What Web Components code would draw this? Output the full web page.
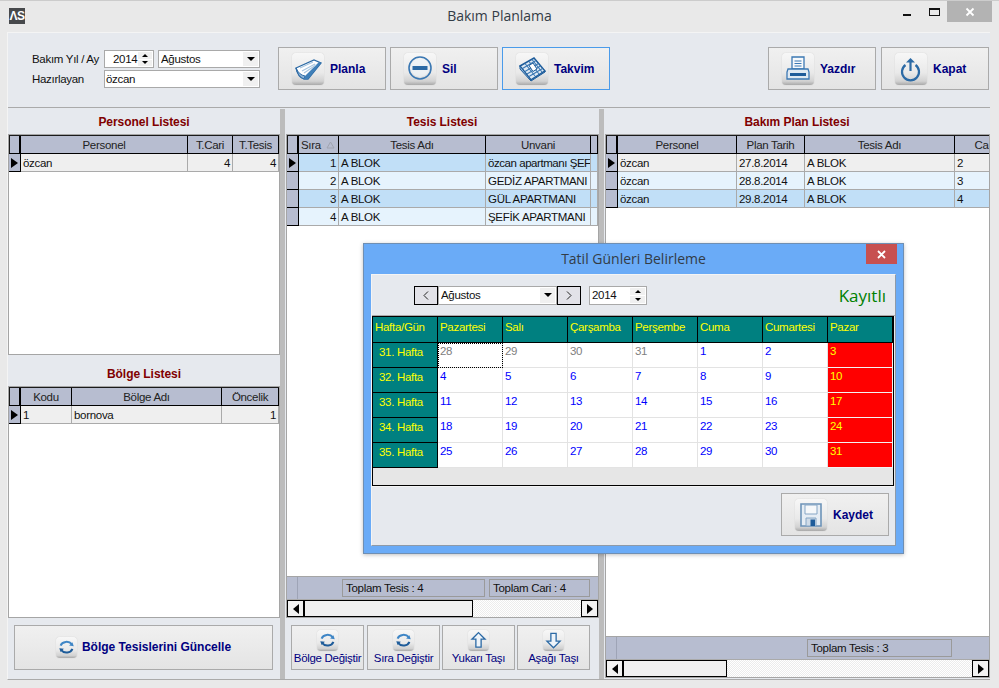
<!DOCTYPE html>
<html lang="tr">
<head>
<meta charset="utf-8">
<title>Bakım Planlama</title>
<style>
  html, body { margin: 0; padding: 0; }
  body { width: 999px; height: 688px; overflow: hidden; font: 11.5px "Liberation Sans", Arial, sans-serif; letter-spacing: -.3px; color: #111; background: #e9e9e9; position: relative; }
</style>
</head>
<body>
<app-window>
  <title-bar slot="top">Bakım Planlama</title-bar>

  <tool-bar slot="top">
    <form-row style="margin-bottom:2px">
      <span style="width:72px;white-space:nowrap">Bakım Yıl / Ay</span>
      <spin-box style="width:50px;margin-right:4px">2014</spin-box>
      <combo-box style="width:102px">Ağustos</combo-box>
    </form-row>
    <form-row>
      <span style="width:72px;white-space:nowrap">Hazırlayan</span>
      <combo-box style="width:156px;padding-left:1px">özcan</combo-box>
    </form-row>
    <push-button slot="left" icon="book" style="width:108px">Planla</push-button>
    <push-button slot="left" icon="minus" style="width:108px">Sil</push-button>
    <push-button slot="left" icon="calendar" active style="width:108px">Takvim</push-button>
    <push-button slot="right" icon="printer" style="width:108px">Yazdır</push-button>
    <push-button slot="right" icon="power" style="width:108px">Kapat</push-button>
  </tool-bar>

  <list-column style="width:272px">
    <panel-title>Personel Listesi</panel-title>
    <data-grid style="height:221px" cols="167px|45px|1fr" lead="12px" head="Personel|T.Cari|T.Tesis" align="lrr" tone="g" rows="özcan|4|4"></data-grid>
    <div style="height:5px;flex:none"></div>
    <panel-title>Bölge Listesi</panel-title>
    <data-grid style="flex:1" cols="51px|150px|1fr" lead="12px" head="Kodu|Bölge Adı|Öncelik" align="llr" tone="g" rows="1|bornova|1"></data-grid>
    <button-row>
      <push-button icon="refresh" small style="width:259px;height:45px;margin-left:6px">Bölge Tesislerini Güncelle</push-button>
    </button-row>
  </list-column>

  <col-split></col-split>

  <list-column style="width:314px">
    <panel-title>Tesis Listesi</panel-title>
    <data-grid style="flex:1;margin-left:1px" cols="40px|147px|105px|1fr" lead="12px" head="Sıra|Tesis Adı|Unvani|" align="rll" tone="bl" sort rows="1|A BLOK|<span style='letter-spacing:-.45px'>özcan apartmanı ŞEF</span>|;2|A BLOK|GEDİZ APARTMANI|;3|A BLOK|GÜL APARTMANI|;4|A BLOK|ŞEFİK APARTMANI|">
      <grid-foot slot="foot" style="--pad:55px">
        <foot-box style="width:143px">Toplam Tesis : 4</foot-box>
        <foot-box style="width:101px">Toplam Cari : 4</foot-box>
      </grid-foot>
      <h-scroll slot="foot" thumb="169"></h-scroll>
    </data-grid>
    <button-row style="gap:2px;padding-left:6px">
      <push-button icon="refresh" stack style="width:73px">Bölge Değiştir</push-button>
      <push-button icon="refresh" stack style="width:73px;margin-left:1px">Sıra Değiştir</push-button>
      <push-button icon="up" stack style="width:73px">Yukarı Taşı</push-button>
      <push-button icon="down" stack style="width:73px">Aşağı Taşı</push-button>
    </button-row>
  </list-column>

  <col-split></col-split>

  <list-column style="flex:1;min-width:0">
    <panel-title>Bakım Plan Listesi</panel-title>
    <data-grid style="flex:1;margin-left:1px;margin-bottom:1px" cols="119px|68px|150px|60px" lead="12px" head="Personel|Plan Tarih|Tesis Adı|Cari" align="llll" tone="glb" rows="özcan|27.8.2014|A BLOK|2;özcan|28.8.2014|A BLOK|3;özcan|29.8.2014|A BLOK|4">
      <grid-foot slot="foot" style="--pad:201px">
        <foot-box style="width:145px">Toplam Tesis : 3</foot-box>
      </grid-foot>
      <h-scroll slot="foot" thumb="104"></h-scroll>
    </data-grid>
  </list-column>
</app-window>

<holiday-dialog>Tatil Günleri Belirleme</holiday-dialog>

<script>
const ICONS = {
  book: `<path d="M4 15 22 7l7 3-13 16h-4Q6 24 4 15Z" fill="#fff" stroke="#2c6aa5" stroke-width="1.300"/><path d="M4 15q3 7 9 8l-1 3Q6 24 4 15Z" fill="#8db4d8" stroke="#2c6aa5"/><path d="M13 23 27 9l2 1-13 16h-4Z" fill="#3f7fb8"/><path d="M8 15l13-6M10 18l13-7M12 20l12-8" stroke="#a9c6e0" stroke-width="1.200"/>`,
  minus: `<circle cx="16" cy="15" r="11" fill="none" stroke="#3b78b3" stroke-width="1.600"/><circle cx="16" cy="15" r="9" fill="#eef3f8" opacity=".7"/><rect x="8.500" y="13" width="15" height="4" fill="#2c6aa5"/>`,
  calendar: `<path d="M4 13 18 5l11 13-14 9Z" fill="#dfe9f3" stroke="#1e5c9a" stroke-width="1.500"/><path d="M6.500 15.500 20 7.500M9 18.500l13.500-8M11 21l13.500-8M13 23.500l13.500-8" stroke="#3b78b3" stroke-width="1.100"/><path d="M9 10.500 19 23M13 8.500l10 12.500M16 6.500l10 12.500" stroke="#3b78b3" stroke-width="1.100"/><path d="M13 12.500l4-2.500 4 6-4 2.500Z" fill="#fff" stroke="#1e5c9a"/><path d="M4 13v3l11 12 14-9v-1L15 27Z" fill="#8db4d8" stroke="#1e5c9a"/>`,
  printer: `<path d="M10 4h12v12H10Z" fill="#f7f9fb" stroke="#3b78b3" stroke-width="1.300"/><path d="M12.500 8h7M12.500 10.500h7M12.500 13h7" stroke="#3b78b3"/><path d="M6 16h20l1 3v7H5v-7Z" fill="#dfe9f2" stroke="#3b78b3" stroke-width="1.300"/><rect x="8" y="20" width="16" height="3" fill="#1e5c9a"/>`,
  power: `<path d="M10.500 12a8.500 8.500 0 1 0 10 0" fill="none" stroke="#2c6aa5" stroke-width="2.200"/><path d="M15.500 18V7" stroke="#2c6aa5" stroke-width="2.200"/><path d="M11 9.500 15.500 5 20 9.500Z" fill="#2c6aa5"/>`,
  refresh: `<path d="M7 13a9.500 8 0 0 1 17-2" fill="none" stroke="#3f86c6" stroke-width="3"/><path d="M27 14l-7-1 5-5Z" fill="#3f86c6"/><path d="M25 18a9.500 8 0 0 1-17 2" fill="none" stroke="#1e5c9a" stroke-width="3"/><path d="M5 17l7 1-5 5Z" fill="#1e5c9a"/>`,
  up: `<path d="M16 4 26 14h-6v12h-8V14H6Z" fill="#eef4fa" stroke="#2c6aa5" stroke-width="2"/>`,
  down: `<path d="M16 27 6 17h6V5h8v12h6Z" fill="#eef4fa" stroke="#2c6aa5" stroke-width="2"/>`,
  save: `<path d="M6 5h20v22H6Z" fill="#e6edf4" stroke="#6d93b8" stroke-width="1.600"/><path d="M10 6h12v9H10Z" fill="#f6f8fa" stroke="#86a6c5"/><path d="M11 19h10v8H11Z" fill="#cfdbe7" stroke="#86a6c5"/><rect x="15.500" y="20.500" width="4.500" height="6.500" fill="#1e5c9a"/>`
};

class AppWindow extends HTMLElement {
  constructor() {
    super();
    this.attachShadow({ mode: "open" });
  }
  connectedCallback() {
    this.shadowRoot.innerHTML = `
      <style>
        :host { display: flex; flex-direction: column; width: 999px; height: 688px; box-sizing: border-box; border-top: 1px solid #ccc; background: #e9e9e9; }
        .panel { margin-left: 7px; width: 983px; height: 648px; flex: none; box-sizing: border-box; border-left: 1px solid #f4f4f4; border-bottom: 1px solid #aaa; background: #e6e9ee; display: flex; flex-direction: column; }
        .cols { display: flex; flex: 1; min-height: 0; }
      </style>
      <slot name="top" id="t"></slot>
      <div class="panel">
        <slot name="tool"></slot>
        <div class="cols"><slot></slot></div>
      </div>
    `;
    // the toolbar belongs inside the panel, the title above it
    this.querySelector("tool-bar").slot = "tool";
  }
}

class TitleBar extends HTMLElement {
  constructor() {
    super();
    this.attachShadow({ mode: "open" });
  }
  connectedCallback() {
    this.shadowRoot.innerHTML = `
      <style>
        :host { display: flex; align-items: center; height: 31px; flex: none; position: relative; font: 14px "Open Sans", sans-serif; letter-spacing: 0; color: #333c46; }
        .logo { position: absolute; left: 9px; top: 7px; width: 16px; height: 16px; background: #47494c; color: #fff; font: bold 12px/16px "Liberation Sans", sans-serif; text-align: center; letter-spacing: -.5px; }
        .t { flex: 1; text-align: center; padding-bottom: 2px; }
        .min { position: absolute; left: 903px; top: 13px; width: 8px; height: 2px; background: #111; }
        .max { position: absolute; left: 929px; top: 7px; width: 9px; height: 5px; border: 1px solid #111; border-top-width: 2px; }
        .close { position: absolute; left: 947px; top: 0; width: 45px; height: 21px; background: #b3b3b3; display: flex; align-items: center; justify-content: center; }
      </style>
      <span class="logo">ΛS</span>
      <span class="t"><slot></slot></span>
      <span class="min"></span><span class="max"></span>
      <span class="close"><svg width="10" height="10" viewBox="0 0 10 10"><path d="M1.500 1.500l7 7M8.500 1.500l-7 7" stroke="#fff" stroke-width="1.800"/></svg></span>
    `;
  }
}

class ToolBar extends HTMLElement {
  constructor() {
    super();
    this.attachShadow({ mode: "open" });
  }
  connectedCallback() {
    this.shadowRoot.innerHTML = `
      <style>
        :host { display: flex; align-items: flex-start; height: 76px; flex: none; box-sizing: border-box; border-top: 1px solid #f4f4f4; border-bottom: 1px solid #aaa; padding: 14px 0 0 24px; }
        .form { width: 228px; margin-right: 18px; padding-top: 3px; }
        .group { display: flex; gap: 4px; }
        .right { margin-left: auto; margin-right: 1px; gap: 5px; }
      </style>
      <div class="form"><slot></slot></div>
      <div class="group"><slot name="left"></slot></div>
      <div class="group right"><slot name="right"></slot></div>
    `;
  }
}

class FormRow extends HTMLElement {
  constructor() {
    super();
    this.attachShadow({ mode: "open" });
  }
  connectedCallback() {
    this.shadowRoot.innerHTML = `
      <style>:host { display: flex; align-items: center; height: 18px; }</style>
      <slot></slot>
    `;
  }
}

class ComboBox extends HTMLElement {
  constructor() {
    super();
    this.attachShadow({ mode: "open" });
  }
  connectedCallback() {
    this.shadowRoot.innerHTML = `
      <style>
        :host { display: flex; align-items: center; height: 18px; box-sizing: border-box; border: 1px solid #a9a9a9; background: #fff; padding-left: 2px; }
        .t { flex: 1; overflow: hidden; white-space: nowrap; }
        .a { width: 15px; align-self: stretch; margin: 1px; background: #f0f0f0; display: flex; align-items: center; justify-content: center; }
        .a i { border: 4px solid transparent; border-top: 4px solid #000; border-bottom: 0; width: 0; height: 0; }
      </style>
      <span class="t"><slot></slot></span>
      <span class="a"><i></i></span>
    `;
  }
}

class SpinBox extends HTMLElement {
  constructor() {
    super();
    this.attachShadow({ mode: "open" });
  }
  connectedCallback() {
    this.shadowRoot.innerHTML = `
      <style>
        :host { display: flex; align-items: center; height: 18px; box-sizing: border-box; border: 1px solid #a9a9a9; background: #fff; padding-left: 8px; }
        .t { flex: 1; }
        .s { width: 15px; align-self: stretch; margin: 1px; display: flex; flex-direction: column; gap: 1px; }
        .s b { flex: 1; background: #f0f0f0; display: flex; align-items: center; justify-content: center; }
        .u { border: 3px solid transparent; border-bottom: 3px solid #000; border-top: 0; width: 0; height: 0; }
        .d { border: 3px solid transparent; border-top: 3px solid #000; border-bottom: 0; width: 0; height: 0; }
      </style>
      <span class="t"><slot></slot></span>
      <span class="s"><b><i class="u"></i></b><b><i class="d"></i></b></span>
    `;
  }
}

class PushButton extends HTMLElement {
  constructor() {
    super();
    this.attachShadow({ mode: "open" });
  }
  connectedCallback() {
    const stack = this.hasAttribute("stack");
    const small = this.hasAttribute("small");
    this.shadowRoot.innerHTML = `
      <style>
        :host { display: flex; box-sizing: border-box; height: ${stack ? 45 : 43}px; flex: none; border: 1px solid ${this.hasAttribute("active") ? "#4a9bea" : "#aaa"}; background: linear-gradient(#f0f0f0, #e4e4e4); color: #000080; font-weight: bold; font-size: 12px; letter-spacing: 0; }
        :host([stack]) { flex-direction: column; align-items: center; font-weight: normal; font-size: 11.500px; letter-spacing: -.3px; white-space: nowrap; padding-top: 4px; gap: 1px; overflow: hidden; }
        :host(:not([stack]):not([small])) { align-items: center; padding-left: 13px; gap: 6px; }
        :host([small]) { align-items: center; justify-content: center; gap: 5px; padding-bottom: 1px; }
        .tile { display: block; flex: none; border-radius: 4px; background: linear-gradient(#f7f7f7 0, #e9e9e9 62%, #d2d2d2 88%, #a9a9a9 100%); box-shadow: 0 0 1px #bbb; }
      </style>
      <svg class="tile" width="${stack || small ? 21 : 32}" height="${stack || small ? 21 : 32}" viewBox="0 0 32 32">${ICONS[this.getAttribute("icon")]}</svg>
      <span><slot></slot></span>
    `;
  }
}

class ListColumn extends HTMLElement {
  constructor() {
    super();
    this.attachShadow({ mode: "open" });
  }
  connectedCallback() {
    this.shadowRoot.innerHTML = `
      <style>:host { display: flex; flex-direction: column; flex: none; min-height: 0; }</style>
      <slot></slot>
    `;
  }
}

class ColSplit extends HTMLElement {
  constructor() {
    super();
    this.attachShadow({ mode: "open" });
  }
  connectedCallback() {
    this.shadowRoot.innerHTML = `
      <style>:host { display: block; width: 5px; flex: none; background: #bcbcbc; margin-top: 1px; }</style>
    `;
  }
}

class PanelTitle extends HTMLElement {
  constructor() {
    super();
    this.attachShadow({ mode: "open" });
  }
  connectedCallback() {
    this.shadowRoot.innerHTML = `
      <style>:host { display: block; height: 26px; flex: none; box-sizing: border-box; padding-top: 7px; text-align: center; font-weight: bold; font-size: 12px; letter-spacing: -.05px; color: #800000; line-height: 14px; }</style>
      <slot></slot>
    `;
  }
}

class DataGrid extends HTMLElement {
  constructor() {
    super();
    this.attachShadow({ mode: "open" });
  }
  connectedCallback() {
    const cols = this.getAttribute("cols").split("|");
    const head = this.getAttribute("head").split("|");
    const align = this.getAttribute("align");
    const tone = this.getAttribute("tone");
    const rows = this.getAttribute("rows").split(";").map(r => r.split("|"));
    const tpl = `${this.getAttribute("lead")} ${cols.join(" ")}`;
    const sorted = this.hasAttribute("sort");
    const j = { l: "flex-start", r: "flex-end" };
    const headHtml = head.map((h, i) => {
      if (sorted && i === 0) return `<div class="c h" style="justify-content:flex-start">${h}<svg class="sort" width="9" height="8" viewBox="0 0 9 8"><path d="M4.500 1 8 7H1Z" fill="none" stroke="#a0a4b0"/></svg></div>`;
      return `<div class="c h">${h}</div>`;
    }).join("");
    const rowsHtml = rows.map((r, n) => `
      <div class="row ${tone[n % tone.length]}" style="grid-template-columns:${tpl}">
        <div class="ind">${n === 0 ? "<i></i>" : ""}</div>
        ${r.map((v, i) => `<div class="c" style="justify-content:${j[align[i]] || "flex-start"}">${v}</div>`).join("")}
      </div>`).join("");
    this.shadowRoot.innerHTML = `
      <style>
        :host { display: flex; flex-direction: column; box-sizing: border-box; border: 1px solid #a5a5a5; border-right-width: 1px; background: #fff; min-height: 0; overflow: hidden; }
        .headrow { display: grid; grid-template-columns: ${tpl}; height: 19px; box-sizing: border-box; border-top: 1px solid #1a1a1a; border-bottom: 1px solid #000; background: #b7bdd0; flex: none; box-shadow: inset 1px 0 0 #1a1a1a; white-space: nowrap; }
        .lead { border-right: 2px solid #000; box-sizing: border-box; }
        .h { justify-content: center; border-right: 1px solid #000; color: #222; }
        .body { flex: 1; min-height: 0; }
        .row { display: grid; height: 18px; box-sizing: border-box; border-bottom: 1px solid #aaa; white-space: nowrap; }
        .g { background: #efefef; }
        .b { background: #c1dff7; }
        .l { background: #e6f3fd; }
        .ind { background: #b7bdd0; border-right: 1px solid #000; border-bottom: 1px solid #000; margin-bottom: -1px; display: flex; align-items: center; padding-left: 2px; }
        .ind i { width: 0; height: 0; border: 5px solid transparent; border-left: 7px solid #000; border-right: 0; }
        .c { display: flex; align-items: center; overflow: hidden; padding: 0 2px; box-sizing: border-box; }
        .row .c { border-right: 1px solid #aaa; }
        .sort { margin-left: 5px; }
      </style>
      <div class="headrow"><div class="lead"></div>${headHtml}</div>
      <div class="body">${rowsHtml}</div>
      <slot name="foot"></slot>
    `;
  }
}

class GridFoot extends HTMLElement {
  constructor() {
    super();
    this.attachShadow({ mode: "open" });
  }
  connectedCallback() {
    this.shadowRoot.innerHTML = `
      <style>
        :host { display: flex; align-items: center; gap: 4px; height: 23px; flex: none; box-sizing: border-box; border-top: 1px solid #a5a5a5; background: linear-gradient(90deg, transparent 10px, #9ea4b6 10px, #9ea4b6 11px, transparent 11px), #b7bdd0; padding-left: var(--pad, 0); }
      </style>
      <slot></slot>
    `;
  }
}

class FootBox extends HTMLElement {
  constructor() {
    super();
    this.attachShadow({ mode: "open" });
  }
  connectedCallback() {
    this.shadowRoot.innerHTML = `
      <style>:host { display: flex; align-items: center; height: 18px; box-sizing: border-box; border: 1px solid #9a9a9a; padding-left: 3px; color: #111; white-space: nowrap; }</style>
      <slot></slot>
    `;
  }
}

class HScroll extends HTMLElement {
  constructor() {
    super();
    this.attachShadow({ mode: "open" });
  }
  connectedCallback() {
    this.shadowRoot.innerHTML = `
      <style>
        :host { display: flex; height: 18px; flex: none; box-sizing: border-box; border-top: 1px solid #aaa; background: repeating-conic-gradient(#ececec 0 25%, #fff 0 50%) 0 0 / 2px 2px; }
        .b { width: 17px; flex: none; box-sizing: border-box; border: 1px solid #000; background: #f2f2f2; display: flex; align-items: center; justify-content: center; }
        .l { width: 0; height: 0; border: 5px solid transparent; border-right: 6px solid #000; border-left: 0; }
        .r { width: 0; height: 0; border: 5px solid transparent; border-left: 6px solid #000; border-right: 0; }
        .thumb { width: ${this.getAttribute("thumb")}px; flex: none; box-sizing: border-box; border: 1px solid #000; background: #f0f0f0; }
        .sp { flex: 1; }
      </style>
      <span class="b"><i class="l"></i></span>
      <span class="thumb"></span>
      <span class="sp"></span>
      <span class="b"><i class="r"></i></span>
    `;
  }
}

class ButtonRow extends HTMLElement {
  constructor() {
    super();
    this.attachShadow({ mode: "open" });
  }
  connectedCallback() {
    this.shadowRoot.innerHTML = `
      <style>:host { display: flex; height: 61px; flex: none; box-sizing: border-box; padding-top: 7px; }</style>
      <slot></slot>
    `;
  }
}

class CalGrid extends HTMLElement {
  constructor() {
    super();
    this.attachShadow({ mode: "open" });
  }
  connectedCallback() {
    const days = ["Pazartesi", "Salı", "Çarşamba", "Perşembe", "Cuma", "Cumartesi", "Pazar"];
    const weeks = [
      [31, [28, 29, 30, 31, 1, 2, 3]],
      [32, [4, 5, 6, 7, 8, 9, 10]],
      [33, [11, 12, 13, 14, 15, 16, 17]],
      [34, [18, 19, 20, 21, 22, 23, 24]],
      [35, [25, 26, 27, 28, 29, 30, 31]]
    ];
    let cells = `<div class="h">Hafta/Gün</div>` + days.map(d => `<div class="h">${d}</div>`).join("");
    weeks.forEach(([w, ds], r) => {
      cells += `<div class="w">${w}. Hafta</div>`;
      ds.forEach((d, i) => {
        let cls = "d";
        if (r === 0 && i < 4) cls += " old";
        if (r === 0 && i === 0) cls += " focus";
        if (i === 6) cls += " red";
        cells += `<div class="${cls}">${d}</div>`;
      });
    });
    this.shadowRoot.innerHTML = `
      <style>
        :host { display: block; width: 522px; height: 170px; box-sizing: border-box; border: 1px solid #000; background: #e6e6e6; flex: none; }
        .g { display: grid; grid-template-columns: repeat(8, 65px); grid-template-rows: 26px repeat(5, 25px); }
        .g > div { box-sizing: border-box; white-space: nowrap; }
        .h { background: #008080; color: #ff0; border-right: 1px solid #000; border-bottom: 1px solid #000; padding: 4px 0 0 2px; }
        .w { background: #008080; color: #ff0; border-right: 1px solid #000; border-bottom: 1px solid #000; padding: 3px 0 0 6px; }
        .d { background: #fff; color: #00f; border-right: 1px solid #e3e3e3; border-bottom: 1px solid #e3e3e3; padding: 2px 0 0 2px; }
        .old { color: #808080; }
        .focus { outline: 1px dotted #000; outline-offset: -1px; }
        .red { background: #f00; color: #ff0; border-color: #f3f3f3; }
      </style>
      <div class="g">${cells}</div>
    `;
  }
}

class HolidayDialog extends HTMLElement {
  constructor() {
    super();
    this.attachShadow({ mode: "open" });
  }
  connectedCallback() {
    this.shadowRoot.innerHTML = `
      <style>
        :host { position: absolute; left: 363px; top: 243px; width: 541px; height: 311px; box-sizing: border-box; border: 1px solid #6f8fb3; background: #6aabf7; display: flex; flex-direction: column; box-shadow: 0 1px 4px rgba(0,0,0,.25); }
        .cap { height: 30px; flex: none; display: flex; align-items: center; justify-content: center; font: 14px "Open Sans", sans-serif; letter-spacing: 0; color: #333c46; position: relative; padding-bottom: 2px; box-sizing: border-box; }
        .x { position: absolute; right: 6px; top: 0; width: 31px; height: 20px; background: #c75050; display: flex; align-items: center; justify-content: center; }
        .in { flex: 1; margin: 0 7px 7px 7px; box-sizing: border-box; border: 1px solid #8e9aa8; border-top-color: #f4f4f4; border-left-color: #f4f4f4; background: #e6e9ee; display: flex; flex-direction: column; }
        .bar { height: 41px; flex: none; box-sizing: border-box; border-bottom: 1px solid #aaa; display: flex; align-items: center; padding: 0 9px 0 42px; }
        .nav { width: 24px; height: 19px; box-sizing: border-box; border: 1px solid #000; background: #e2e2e8; display: flex; align-items: center; justify-content: center; }
        combo-box { width: 119px; height: 19px; }
        spin-box { width: 58px; height: 19px; margin-left: 8px; padding-left: 2px; }
        .ok { margin-left: auto; color: #008000; font: 17px "Open Sans", sans-serif; letter-spacing: 0; }
        .foot { flex: 1; box-sizing: border-box; border-top: 1px solid #f4f4f4; display: flex; justify-content: flex-end; align-items: flex-start; padding: 6px 6px 0 0; }
      </style>
      <div class="cap"><slot></slot>
        <span class="x"><svg width="9" height="9" viewBox="0 0 9 9"><path d="M1 1l7 7M8 1l-7 7" stroke="#fff" stroke-width="1.800"/></svg></span>
      </div>
      <div class="in">
        <div class="bar">
          <span class="nav"><svg width="6" height="9" viewBox="0 0 6 9"><path d="M5 .5 1 4.500 5 8.500" fill="none" stroke="#222"/></svg></span>
          <combo-box>Ağustos</combo-box>
          <span class="nav"><svg width="6" height="9" viewBox="0 0 6 9"><path d="M1 .5 5 4.500 1 8.500" fill="none" stroke="#222"/></svg></span>
          <spin-box>2014</spin-box>
          <span class="ok">Kayıtlı</span>
        </div>
        <cal-grid></cal-grid>
        <div class="foot"><push-button icon="save" style="width:108px">Kaydet</push-button></div>
      </div>
    `;
  }
}

customElements.define("app-window", AppWindow);
customElements.define("title-bar", TitleBar);
customElements.define("tool-bar", ToolBar);
customElements.define("form-row", FormRow);
customElements.define("combo-box", ComboBox);
customElements.define("spin-box", SpinBox);
customElements.define("push-button", PushButton);
customElements.define("list-column", ListColumn);
customElements.define("col-split", ColSplit);
customElements.define("panel-title", PanelTitle);
customElements.define("data-grid", DataGrid);
customElements.define("grid-foot", GridFoot);
customElements.define("foot-box", FootBox);
customElements.define("h-scroll", HScroll);
customElements.define("button-row", ButtonRow);
customElements.define("cal-grid", CalGrid);
customElements.define("holiday-dialog", HolidayDialog);
</script>
</body>
</html>
